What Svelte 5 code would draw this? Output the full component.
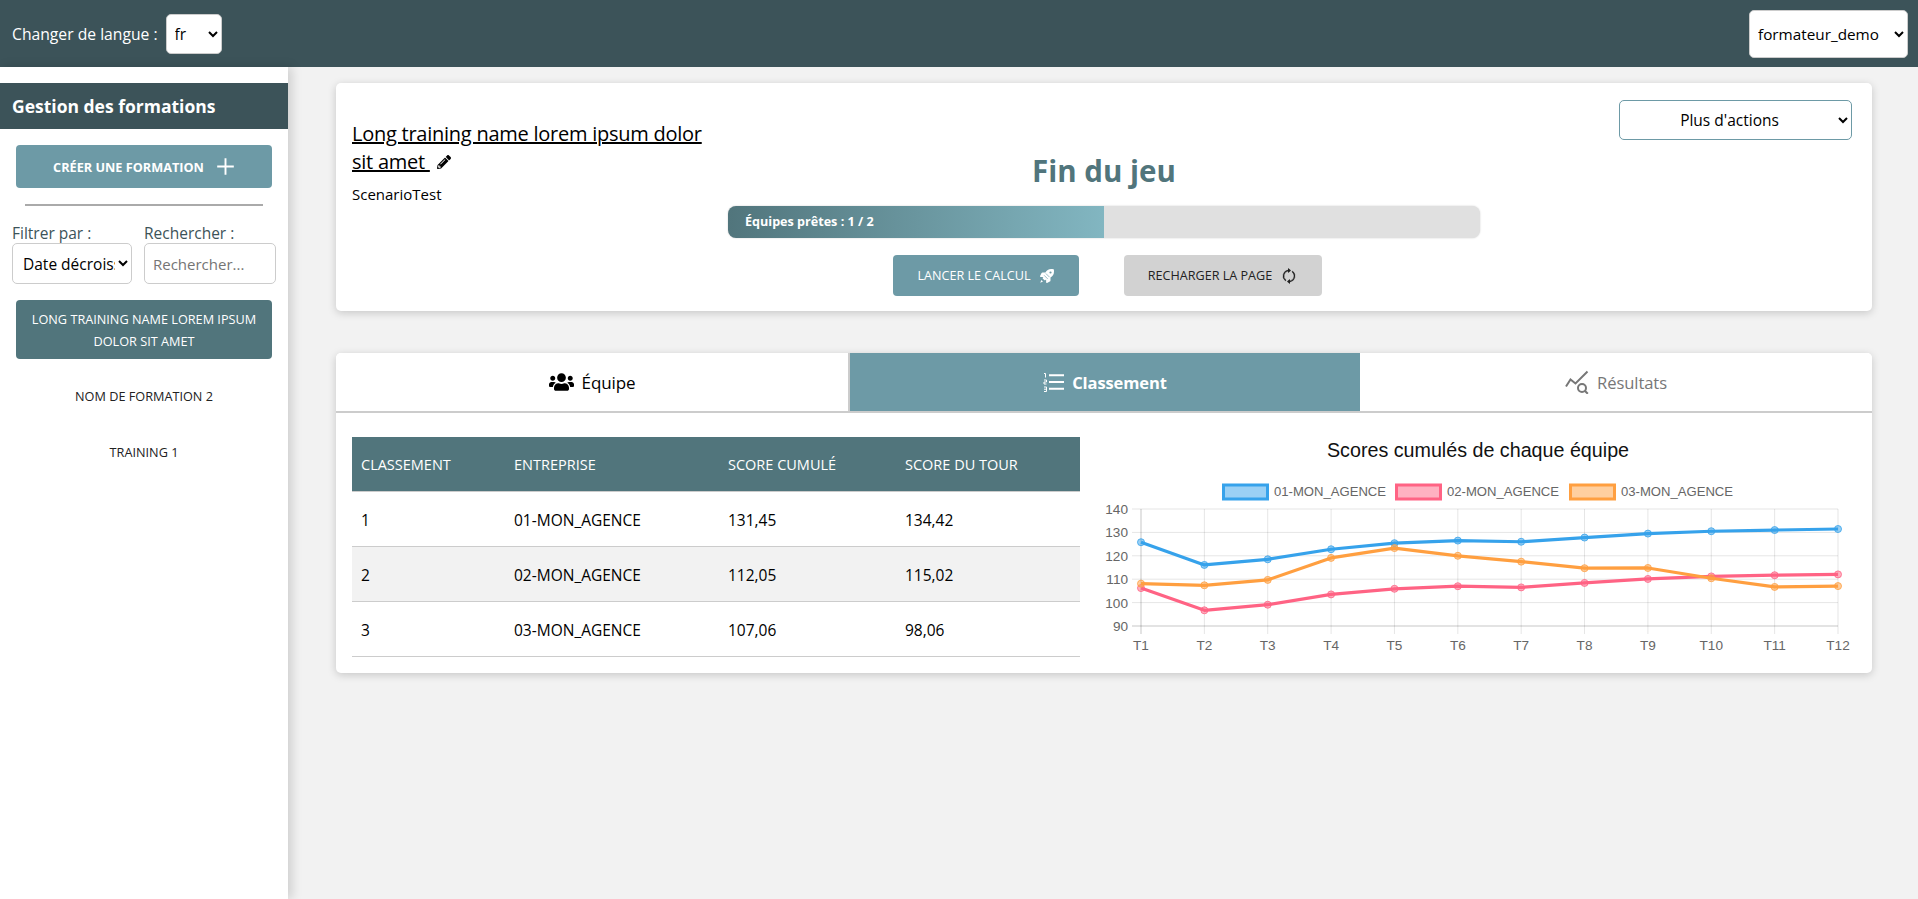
<script>
	const series = [
		{ name: '01-MON_AGENCE', color: '54,162,235', values: [125.8, 116.1, 118.5, 122.8, 125.4, 126.5, 126, 127.8, 129.5, 130.5, 131, 131.45] },
		{ name: '02-MON_AGENCE', color: '255,99,132', values: [106.2, 96.7, 99.1, 103.5, 105.9, 107, 106.5, 108.4, 110.1, 111.2, 111.7, 112.05] },
		{ name: '03-MON_AGENCE', color: '255,159,64', values: [108.1, 107.4, 109.7, 119.1, 123.3, 120, 117.5, 114.7, 114.8, 110.4, 106.7, 107.06] }
	];
	const rows = [
		[1, '01-MON_AGENCE', '131,45', '134,42'],
		[2, '02-MON_AGENCE', '112,05', '115,02'],
		[3, '03-MON_AGENCE', '107,06', '98,06']
	];
	const ticks = [140, 130, 120, 110, 100, 90];
	const labels = ['T1', 'T2', 'T3', 'T4', 'T5', 'T6', 'T7', 'T8', 'T9', 'T10', 'T11', 'T12'];
	const legendX = [1222, 1395, 1569];

	// chart canvas starts at 1090,430 on the page
	const px = (i) => 51 + (i * 697) / 11;
	const py = (v) => 79 + (140 - v) * 2.34;
	const points = (values) => values.map((v, i) => `${px(i)},${py(v)}`).join(' ');
</script>

<header class="topbar">
	<div class="lang">
		<label for="lang">Changer de langue :</label>
		<select id="lang"><option>fr</option><option>en</option></select>
	</div>
	<select class="user"><option>formateur_demo</option></select>
</header>

<div class="page">
	<aside class="sidebar">
		<h2>Gestion des formations</h2>
		<button class="create">
			Créer une formation
			<svg viewBox="0 0 16 16" width="19" height="19"><path d="M8 1v14M1 8h14" stroke="currentColor" stroke-width="1.6" fill="none" /></svg>
		</button>
		<hr />
		<div class="filters">
			<div class="field">
				<label for="sort">Filtrer par :</label>
				<select id="sort"><option>Date décroissante</option></select>
			</div>
			<div class="field">
				<label for="search">Rechercher :</label>
				<input id="search" placeholder="Rechercher..." />
			</div>
		</div>
		<ul class="trainings">
			<li class="active">Long training name lorem ipsum dolor sit amet</li>
			<li>Nom de formation 2</li>
			<li>Training 1</li>
		</ul>
	</aside>

	<main>
		<section class="card status">
			<div class="info">
				<h3>
					<span class="name">Long training name lorem ipsum dolor sit amet&nbsp;</span>
					<svg class="pencil" viewBox="0 0 512 512" width="14" height="14"><path d="M497.9 142.1l-46.1 46.1c-4.7 4.7-12.3 4.7-17 0l-111-111c-4.7-4.7-4.7-12.3 0-17l46.1-46.1c18.7-18.7 49.1-18.7 67.9 0l60.1 60.1c18.8 18.7 18.8 49.1 0 67.9zM284.2 99.8L21.6 362.4.4 483.9c-2.9 16.4 11.4 30.6 27.8 27.8l121.5-21.3 262.6-262.6c4.7-4.7 4.7-12.3 0-17l-111-111c-4.8-4.7-12.4-4.7-17.1 0zM124.1 339.9c-5.5-5.5-5.5-14.3 0-19.8l154-154c5.5-5.5 14.3-5.5 19.8 0s5.5 14.3 0 19.8l-154 154c-5.5 5.5-14.3 5.500-19.8 0zM88 424h48v36.3l-64.5 11.3-31.1-31.1L51.7 376H88v48z" /></svg>
				</h3>
				<p>ScenarioTest</p>
			</div>
			<div class="progress-block">
				<h1>Fin du jeu</h1>
				<div class="progress">
					<div class="fill" style="width: 50%">Équipes prêtes : 1 / 2</div>
				</div>
				<div class="actions">
					<button class="run">
						Lancer le calcul
						<svg viewBox="0 0 512 512" width="14" height="14">
							<path d="M505.12 19.09c-1.19-5.53-6.66-11-12.21-12.19C460.72 0 435.51 0 410.41 0 307.18 0 245.27 55.2 199.05 128H94.84c-16.35.02-35.56 11.88-42.89 26.48L2.52 253.3A28.4 28.4 0 0 0 0 264a24 24 0 0 0 24 24h103.81l-22.47 22.47c-11.37 11.36-13 32.26 0 45.25l50.9 50.9c11.16 11.19 32.16 13.16 45.28 0L224 384.16V488a24 24 0 0 0 24 24 28.56 28.56 0 0 0 10.71-2.52l98.73-49.39c14.63-7.3 26.5-26.5 26.5-42.86V312.8c72.6-46.31 128.04-108.41 128.04-211.1C512.08 76.5 512.08 51.3 505.12 19.09zM384.04 168a40 40 0 1 1 40-40 40 40 0 0 1-40 40z" />
							<path d="M150 230L282 362M215 165L347 297" stroke="#6d9aa6" stroke-width="24" fill="none" />
							<path d="M50 400l60 60-100 45z" />
						</svg>
					</button>
					<button class="reload">
						Recharger la page
						<svg viewBox="0 0 16 16" width="16" height="16" transform="rotate(90)">
							<path d="M11.534 7h3.932a.25.25 0 0 1 .192.41l-1.966 2.36a.25.25 0 0 1-.384 0l-1.966-2.36a.25.25 0 0 1 .192-.41zm-11 2h3.932a.25.25 0 0 0 .192-.41L2.692 6.23a.25.25 0 0 0-.384 0L.342 8.59A.25.25 0 0 0 .534 9z" />
							<path d="M8 3c-1.552 0-2.94.707-3.857 1.818a.5.5 0 1 1-.771-.636A6.002 6.002 0 0 1 13.917 7H12.9A5.002 5.002 0 0 0 8 3zM3.1 9a5.002 5.002 0 0 0 8.757 2.182.5.5 0 1 1 .771.636A6.002 6.002 0 0 1 2.083 9H3.1z" stroke="currentColor" stroke-width="0.4" />
						</svg>
					</button>
				</div>
			</div>
			<select class="more"><option>Plus d'actions</option></select>
		</section>

		<section class="card results">
			<nav class="tabs">
				<button class="tab">
					<svg viewBox="0 0 640 512" width="25" height="20"><path d="M96 224c35.3 0 64-28.7 64-64s-28.7-64-64-64-64 28.7-64 64 28.7 64 64 64zm448 0c35.3 0 64-28.7 64-64s-28.7-64-64-64-64 28.7-64 64 28.7 64 64 64zm32 32h-64c-17.6 0-33.5 7.1-45.1 18.6 40.3 22.1 68.9 62 75.1 109.4h66c17.7 0 32-14.3 32-32v-32c0-35.3-28.7-64-64-64zm-256 0c61.9 0 112-50.1 112-112S381.9 32 320 32 208 82.1 208 144s50.1 112 112 112zm76.8 32h-8.3c-20.8 10-43.9 16-68.5 16s-47.6-6-68.5-16h-8.3C179.6 288 128 339.6 128 403.2V432c0 26.5 21.5 48 48 48h288c26.5 0 48-21.5 48-48v-28.8c0-63.6-51.6-115.2-115.2-115.2zm-223.7-13.4C161.5 263.1 145.6 256 128 256H64c-35.3 0-64 28.7-64 64v32c0 17.7 14.3 32 32 32h65.9c6.3-47.4 34.9-87.3 75.2-109.4z" /></svg>
					Équipe
				</button>
				<button class="tab current">
					<svg viewBox="0 0 21 20" width="21" height="20" fill="none" stroke="currentColor">
						<path d="M6 3.300h15M6 10h15M6 16.700h15" stroke-width="2" />
						<path d="M1 1.500h1.500v4M1 8h2.500v2h-2.500v2h2.500M1 15h2.500v4.500h-2.500M1 17.200h2.500" stroke-width="1" />
					</svg>
					Classement
				</button>
				<button class="tab muted">
					<svg viewBox="0 0 24 24" width="24" height="24" fill="none" stroke="currentColor" stroke-width="2">
						<path d="M1 16.500l4.500-7 5 4L22.500 1.500" />
						<circle cx="17" cy="18" r="4" fill="#fff" />
						<path d="M19.800 20.800l3 3" />
					</svg>
					Résultats
				</button>
			</nav>
			<div class="panel">
				<table>
					<thead>
						<tr><th>Classement</th><th>Entreprise</th><th>Score cumulé</th><th>Score du tour</th></tr>
					</thead>
					<tbody>
						{#each rows as row}
							<tr>
								{#each row as cell}
									<td>{cell}</td>
								{/each}
							</tr>
						{/each}
					</tbody>
				</table>

				<svg class="chart" viewBox="0 0 770 240" width="770" height="240">
					<text class="chart-title" x="388" y="27" text-anchor="middle">Scores cumulés de chaque équipe</text>
					{#each series as s, i}
						<rect x={legendX[i] - 1090 + 1.5} y="55" width="44" height="14" fill="rgba({s.color},0.5)" stroke="rgb({s.color})" stroke-width="3" />
						<text class="legend" x={legendX[i] - 1090 + 52} y="66">{s.name}</text>
					{/each}
					{#each ticks as t}
						<line class={t === 90 ? 'axis' : 'grid'} x1="42" x2="748" y1={py(t)} y2={py(t)} />
						<text class="tick" x="38" y={py(t) + 5} text-anchor="end">{t}</text>
					{/each}
					{#each labels as l, i}
						<line class={i === 0 ? 'axis' : 'grid'} x1={px(i)} x2={px(i)} y1="79" y2="204" />
						<text class="tick" x={px(i)} y="220" text-anchor="middle">{l}</text>
					{/each}
					{#each series as s}
						<polyline points={points(s.values)} fill="none" stroke="rgb({s.color})" stroke-width="3.200" stroke-linejoin="round" />
						{#each s.values as v, i}
							<circle cx={px(i)} cy={py(v)} r="3.500" fill="rgba({s.color},0.5)" stroke="rgba({s.color},0.8)" />
						{/each}
					{/each}
				</svg>
			</div>
		</section>
	</main>
</div>

<style>
	:global(body) {
		background: #f2f2f2;
		font-family: 'Open Sans', 'Noto Sans', sans-serif;
		font-size: 15.500px;
		color: #000;
		overflow: hidden;
	}

	button {
		font-family: inherit;
		border: none;
		cursor: pointer;
	}

	select,
	input {
		font-family: inherit;
		font-size: 15.500px;
		background: #fff;
		color: #000;
		border: 1px solid #ccc;
		border-radius: 5px;
		box-sizing: border-box;
	}

	.topbar {
		height: 67px;
		background: #3c5359;
		display: flex;
		justify-content: space-between;
		align-items: center;
		padding: 0 10px 0 12px;
		color: #fff;
	}

	.lang {
		display: flex;
		align-items: center;
		gap: 8px;
	}

	.lang label {
		font-size: 15.700px;
	}

	.lang select {
		width: 56px;
		height: 40px;
		padding-left: 4px;
	}

	.user {
		width: 159px;
		height: 48px;
		padding-left: 4px;
		font-size: 15.300px;
	}

	.page {
		display: flex;
		height: 832px;
	}

	.sidebar {
		width: 288px;
		flex: none;
		background: #fff;
		box-shadow: 4px 0 10px rgba(0, 0, 0, 0.15);
		padding-top: 16px;
		box-sizing: border-box;
	}

	.sidebar h2 {
		margin: 0;
		height: 46px;
		line-height: 46px;
		padding-left: 12px;
		background: #3c5359;
		color: #fff;
		font-size: 17.500px;
		font-weight: 700;
	}

	.create {
		display: flex;
		align-items: center;
		justify-content: center;
		gap: 12px;
		width: 256px;
		height: 43px;
		margin: 16px 16px 0;
		background: #6d9aa6;
		color: #fff;
		border-radius: 4px;
		font-size: 12.700px;
		font-weight: 700;
		text-transform: uppercase;
	}

	hr {
		width: 238px;
		margin: 16px auto 0;
		border: none;
		border-top: 2px solid #aaa;
	}

	.filters {
		display: flex;
		gap: 12px;
		margin: 17px 12px 0;
	}

	.field {
		display: flex;
		flex-direction: column;
		color: #3c5359;
		line-height: 20px;
	}

	.field select {
		width: 120px;
		height: 41px;
		padding-left: 6px;
	}

	.field input {
		width: 132px;
		height: 41px;
		padding: 0 8px;
		font-size: 15px;
	}

	.trainings {
		list-style: none;
		margin: 16px 16px 0;
		padding: 0;
		text-align: center;
		font-size: 12.700px;
		text-transform: uppercase;
		line-height: 22px;
	}

	.trainings li {
		padding: 8px 10px;
		margin-bottom: 18px;
		border-radius: 4px;
		color: #222;
	}

	.trainings li.active {
		padding: 8px 10px 7px;
		background: #51757c;
		color: #fff;
		margin-bottom: 18px;
	}

	main {
		flex: 1;
		padding: 16px 46px 0 48px;
		min-width: 0;
	}

	.card {
		background: #fff;
		border-radius: 5px;
		box-shadow: 0 2px 8px rgba(0, 0, 0, 0.18);
	}

	.status {
		display: grid;
		grid-template-columns: 376px 752px 1fr;
		height: 228px;
		box-sizing: border-box;
		padding: 17px 20px 0 16px;
	}

	.info h3 {
		margin: 20px 0 0;
		max-width: 360px;
		font-size: 20px;
		line-height: 28px;
		font-weight: 400;
		letter-spacing: -0.25px;
	}

	.name {
		text-decoration: underline;
	}

	.pencil {
		margin-left: 2px;
	}

	.info p {
		margin: 8px 0 0;
		font-size: 15px;
	}

	.progress-block {
		text-align: center;
	}

	h1 {
		margin: 51px 0 15px;
		font-size: 29.500px;
		line-height: 40px;
		font-weight: 700;
		color: #51757c;
	}

	.progress {
		height: 32px;
		background: #e0e0e0;
		border-radius: 8px;
		overflow: hidden;
		box-shadow: 0 0 2px rgba(0, 0, 0, 0.2);
	}

	.fill {
		height: 100%;
		padding-left: 17px;
		box-sizing: border-box;
		background: linear-gradient(90deg, #51757c, #82b6c1);
		color: #fff;
		font-size: 12.600px;
		font-weight: 700;
		line-height: 32px;
		text-align: left;
	}

	.actions {
		display: flex;
		justify-content: center;
		gap: 45px;
		margin-top: 17px;
		padding-left: 6px;
	}

	.actions button {
		display: flex;
		align-items: center;
		justify-content: center;
		gap: 9px;
		height: 41px;
		border-radius: 4px;
		font-size: 12.600px;
		text-transform: uppercase;
	}

	.run {
		width: 186px;
		background: #6d9aa6;
		color: #fff;
		fill: #fff;
	}

	.reload {
		width: 198px;
		background: #d2d2d2;
		color: #222;
		fill: #222;
	}

	.more {
		width: 233px;
		height: 40px;
		justify-self: end;
		border-color: #6d9aa6;
		text-align: center;
	}

	.results {
		margin-top: 42px;
		height: 320px;
		overflow: hidden;
	}

	.tabs {
		display: grid;
		grid-template-columns: repeat(3, 1fr);
		height: 58px;
		border-bottom: 2px solid #ccc;
		box-sizing: content-box;
	}

	.tab {
		display: flex;
		align-items: center;
		justify-content: center;
		gap: 8px;
		background: #fff;
		color: #000;
		font-size: 17px;
		letter-spacing: -0.1px;
		fill: currentColor;
	}

	.tab.current {
		background: #6d9aa6;
		color: #fff;
		font-weight: 700;
		font-size: 16.500px;
		border-left: 2px solid #ccc;
	}

	.tab.muted {
		color: #777;
		font-size: 16.600px;
	}

	.panel {
		display: flex;
		padding: 24px 16px 0;
		gap: 10px;
	}

	table {
		width: 728px;
		flex: none;
		border-collapse: collapse;
		table-layout: fixed;
		align-self: flex-start;
		font-size: 15.500px;
	}

	th,
	td {
		box-sizing: border-box;
		padding: 2px 9px 0;
	}

	th {
		height: 54px;
		background: #51757c;
		color: #fff;
		font-weight: 400;
		font-size: 14.500px;
		text-align: left;
		text-transform: uppercase;
		border-bottom: 1px solid #ccc;
	}

	th:nth-child(1) {
		width: 153px;
	}

	th:nth-child(2) {
		width: 214px;
	}

	th:nth-child(3) {
		width: 177px;
	}

	td {
		height: 55px;
		border-bottom: 1px solid #ccc;
	}

	tbody tr:nth-child(even) {
		background: #f2f2f2;
	}

	.chart {
		margin-top: -7px;
		flex: none;
	}

	.chart text {
		font-family: 'Liberation Sans', Arial, sans-serif;
	}

	.chart-title {
		font-size: 19.700px;
		fill: #111;
	}

	.legend {
		font-size: 13.100px;
		fill: #666;
	}

	.tick {
		font-size: 13.600px;
		fill: #666;
	}

	.grid {
		stroke: rgba(0, 0, 0, 0.1);
		stroke-width: 1;
	}

	.axis {
		stroke: rgba(0, 0, 0, 0.22);
		stroke-width: 1;
	}
</style>
